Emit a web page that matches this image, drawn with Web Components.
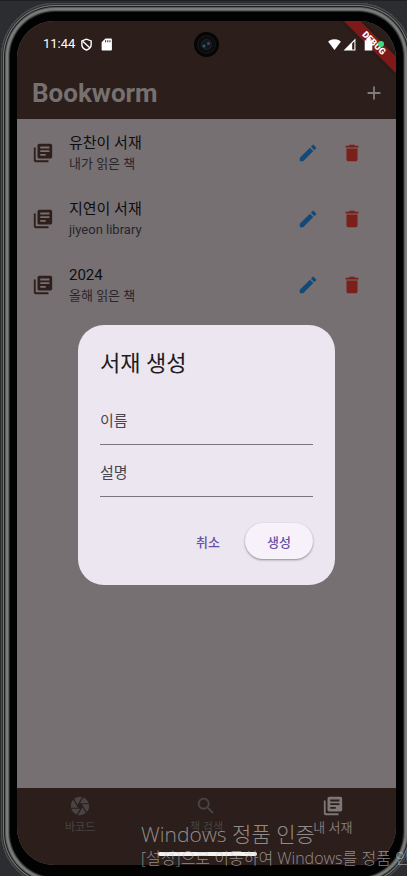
<!DOCTYPE html>
<html lang="ko">
<head>
<meta charset="utf-8">
<meta name="viewport" content="width=device-width, initial-scale=1">
<title>Bookworm</title>
<style>
  html, body { margin: 0; height: 100%; }
  body {
    overflow: hidden;
    background: #2b2d30;
    font-family: Roboto, "Noto Sans CJK KR", sans-serif;
    --bar: #2c1e1b;
    --page: #767073;
  }
</style>
</head>
<body>
<device-frame>
  <status-bar slot="status"></status-bar>
  <app-bar>Bookworm</app-bar>
  <shelf-list>
    <shelf-item><span slot="title">유찬이 서재</span><span slot="note">내가 읽은 책</span></shelf-item>
    <shelf-item><span slot="title">지연이 서재</span><span slot="note">jiyeon library</span></shelf-item>
    <shelf-item><span slot="title">2024</span><span slot="note">올해 읽은 책</span></shelf-item>
  </shelf-list>
  <bottom-nav>
    <nav-item icon="camera">바코드</nav-item>
    <nav-item icon="search">책 검색</nav-item>
    <nav-item icon="books" selected>내 서재</nav-item>
  </bottom-nav>
  <shelf-dialog slot="overlay"></shelf-dialog>
  <debug-banner slot="overlay">DEBUG</debug-banner>
</device-frame>
<activation-mark>
  <span slot="head">Windows 정품 인증</span>
  <span slot="text">[설정]으로 이동하여 Windows를 정품 인증합니다.</span>
</activation-mark>

<script>
const ICONS = {
  books: '<path d="M4 6H2v14c0 1.1.9 2 2 2h14v-2H4V6zm16-4H8c-1.1 0-2 .9-2 2v12c0 1.1.9 2 2 2h12c1.1 0 2-.9 2-2V4c0-1.1-.9-2-2-2zm-1 9H9V9h10v2zm-4 4H9v-2h6v2zm4-8H9V5h10v2z"/>',
  edit: '<path d="M3 17.25V21h3.75L17.81 9.94l-3.75-3.75L3 17.25zM20.71 7.04c.39-.39.39-1.02 0-1.41l-2.34-2.34c-.39-.39-1.02-.39-1.41 0l-1.83 1.83 3.75 3.75 1.83-1.83z"/>',
  trash: '<path d="M6 19c0 1.1.9 2 2 2h8c1.1 0 2-.9 2-2V7H6v12zM19 4h-3.5l-1-1h-5l-1 1H5v2h14V4z"/>',
  add: '<path d="M19 13h-6v6h-2v-6H5v-2h6V5h2v6h6v2z"/>',
  search: '<path d="M15.5 14h-.79l-.28-.27C15.41 12.59 16 11.11 16 9.5 16 5.91 13.09 3 9.5 3S3 5.91 3 9.5 5.91 16 9.5 16c1.61 0 3.09-.59 4.23-1.57l.27.28v.79l5 4.99L20.49 19l-4.99-5zm-6 0C7.01 14 5 11.99 5 9.5S7.01 5 9.5 5 14 7.01 14 9.5 11.99 14 9.5 14z"/>',
  camera: '<path d="M9.4 10.5l4.77-8.26C13.47 2.09 12.75 2 12 2c-2.4 0-4.6.85-6.32 2.25l3.66 6.35.06-.1zM21.54 9c-.92-2.92-3.15-5.26-6-6.34L11.88 9h9.66zm.26 1h-7.49l.29.5 4.76 8.25C21 16.97 22 14.61 22 12c0-.69-.07-1.35-.2-2zM8.54 12l-3.9-6.75C3.01 7.03 2 9.39 2 12c0 .69.07 1.35.2 2h7.49l-1.15-2zm-6.08 3c.92 2.92 3.15 5.26 6 6.34L12.12 15H2.46zm11.27 0l-3.9 6.76c.7.15 1.42.24 2.17.24 2.4 0 4.6-.85 6.32-2.25l-3.66-6.35-.93 1.6z"/>',
  shield: '<path d="M12 2.2L3.4 5.4v6c0 5.2 3.6 9.2 8.6 10.7 5-1.5 8.6-5.5 8.6-10.7v-6z" fill="none" stroke="currentColor" stroke-width="2.6"/><path d="M5 6l13 12" stroke="currentColor" stroke-width="2.6"/>',
  sd: '<path fill-rule="evenodd" d="M20 1H10L3 8v13c0 1.1.9 2 2 2h15c1.1 0 2-.9 2-2V3c0-1.1-.9-2-2-2zM9.500 8V4h1.800v4zm4 0V4h1.800v4zm4 0V4h1.800v4z"/>',
  wifi: '<path d="M12 22L.4 6.8C1 6.3 5 2.5 12 2.500s11 3.800 11.600 4.300z"/>',
  signal: '<path fill-rule="evenodd" d="M1 23L23 1v22zM17 21h4V6l-4 4z"/>',
  battery: '<path d="M5 4h4V1h6v3h4v19H5z"/>'
};

const define = (tag, html, setup) => customElements.define(tag, class extends HTMLElement {
  constructor() {
    super();
    const t = document.createElement('template');
    t.innerHTML = html;
    this.attachShadow({ mode: 'open' }).append(t.content.cloneNode(true));
  }
  connectedCallback() { if (setup) setup(this, this.shadowRoot); }
});

define('ui-icon', `
  <style>
    :host { display: block; flex: none; width: 22px; height: 22px; }
    svg { display: block; width: 100%; height: 100%; fill: currentColor; }
  </style>
  <svg viewBox="0 0 24 24" aria-hidden="true"></svg>`,
  (el, root) => { root.querySelector('svg').innerHTML = ICONS[el.getAttribute('name')]; });

define('device-frame', `
  <style>
    :host { display: block; box-sizing: border-box; height: 100%; padding: 2px 0 0 1px; border-top: 1px solid #1e1f22; }
    .case {
      box-sizing: border-box; height: calc(100% + 10px); margin: 0 -5px 0 0;
      padding: 18px 16px 21px 16px; border-radius: 54px; background: #020202;
      box-shadow: inset 0 0 0 1px #4b4d4d, inset 0 0 0 2px #2e2f2f, inset 0 0 0 3px #767878,
        inset 0 0 0 4px #1c1d1d, inset 0 0 0 5px #5a5c5c, inset 0 0 0 7px #7b7d7d,
        inset 0 0 0 8px #5d5f5f, inset 0 0 0 9px #242525;
    }
    .screen {
      position: relative; display: flex; flex-direction: column; height: 100%;
      overflow: hidden; border-radius: 37px; background: var(--page);
    }
  </style>
  <div class="case"><div class="screen">
    <slot name="status"></slot>
    <slot></slot>
    <slot name="overlay"></slot>
  </div></div>`);

define('status-bar', `
  <style>
    :host {
      display: grid; grid-template-columns: 1fr 26px 1fr; align-items: center; flex: none;
      height: 46px; padding: 0 12px 0 26px; background: var(--bar); color: #fff;
      font-size: 13px; line-height: 16px;
    }
    .side { display: flex; align-items: center; }
    .left { gap: 5px; }
    .right { justify-content: flex-end; gap: 2px; position: relative; z-index: 4; }
    ui-icon { width: 13px; height: 13px; }
    .sd { margin-left: 2px; }
    .bat { margin-left: 4px; }
    .dot { width: 6px; height: 6px; margin-left: 1px; border-radius: 50%; background: #3ddc84; }
    .lens { width: 25px; height: 25px; margin-left: -7px; }
  </style>
  <div class="side left"><span>11:44</span><ui-icon name="shield"></ui-icon><ui-icon class="sd" name="sd"></ui-icon></div>
  <svg class="lens" viewBox="0 0 25 25" aria-hidden="true">
    <circle cx="12.5" cy="12.5" r="12.5" fill="#050505"/>
    <circle cx="12.5" cy="12.5" r="9" fill="#0b0c0e" stroke="#17191b"/>
    <circle cx="12.5" cy="12.5" r="5" fill="#11171d" stroke="#202429"/>
    <circle cx="10" cy="14" r="1.5" fill="#315b63"/>
    <circle cx="14.5" cy="11.5" r="1.5" fill="#51405f"/>
  </svg>
  <div class="side right">
    <ui-icon name="wifi"></ui-icon><ui-icon name="signal"></ui-icon><ui-icon class="bat" name="battery"></ui-icon><span class="dot"></span>
  </div>`);

define('app-bar', `
  <style>
    :host {
      display: flex; align-items: center; justify-content: space-between; flex: none;
      height: 52px; padding: 0 11px 0 15px; background: var(--bar); color: #757171;
    }
    h1 { margin: 0; font-size: 26px; line-height: 32px; font-weight: 700; }
    button { padding: 0; border: 0; background: none; color: #817b7a; }
  </style>
  <h1><slot></slot></h1>
  <button aria-label="추가"><ui-icon name="add"></ui-icon></button>`);

define('shelf-list', `
  <style>:host { display: flex; flex-direction: column; flex: 1; min-height: 0; padding-top: 1px; }</style>
  <slot></slot>`);

define('shelf-item', `
  <style>
    :host { display: flex; align-items: center; height: 66px; padding: 0 22px 0 15px; }
    .lead { color: #2e1f1b; margin-right: 15px; }
    .text { flex: 1; min-width: 0; }
    .title { font-size: 15px; line-height: 22px; color: #0e0d0f; }
    .note { font-size: 13px; line-height: 20px; color: #28252a; }
    button { display: grid; place-items: center; width: 44px; height: 44px; padding: 0; border: 0; background: none; }
    .edit { color: #114a78; }
    .del { color: #7a1f19; }
  </style>
  <ui-icon class="lead" name="books"></ui-icon>
  <div class="text">
    <div class="title"><slot name="title"></slot></div>
    <div class="note"><slot name="note"></slot></div>
  </div>
  <button class="edit" aria-label="수정"><ui-icon name="edit"></ui-icon></button>
  <button class="del" aria-label="삭제"><ui-icon name="trash"></ui-icon></button>`);

define('bottom-nav', `
  <style>
    :host { display: block; flex: none; position: relative; background: var(--bar); }
    nav { display: flex; height: 77px; }
    .home { position: absolute; left: 50%; bottom: 9px; width: 99px; height: 4px; margin-left: -49px; border-radius: 2px; background: #f4f2f2; }
  </style>
  <nav><slot></slot></nav>
  <div class="home"></div>`);

define('nav-item', `
  <style>
    :host { display: block; flex: 1; color: #484443; font-size: 11px; }
    :host([selected]) { color: #7d7776; font-size: 13px; }
    button {
      display: flex; flex-direction: column; align-items: center; gap: 1px; width: 100%; padding: 7px 0 0;
      border: 0; background: none; color: inherit; font: inherit; line-height: 20px;
    }
  </style>
  <button><ui-icon></ui-icon><slot></slot></button>`,
  (el, root) => {
    const old = root.querySelector('ui-icon');
    const icon = document.createElement('ui-icon');
    icon.setAttribute('name', el.getAttribute('icon'));
    old.replaceWith(icon);
  });

define('shelf-dialog', `
  <style>
    :host { position: absolute; inset: 0; display: flex; align-items: center; padding: 46px 61px 22px 61px; }
    dialog {
      position: static; box-sizing: border-box; width: 100%; max-width: 560px; margin: 0 auto;
      padding: 23px 22px 26px; border: 0; border-radius: 26px; background: #ece6f0; color: #1d1b20;
    }
    h2 { margin: 0 0 13px; font-size: 22px; line-height: 32px; font-weight: 400; }
    input {
      display: block; box-sizing: border-box; width: 100%; height: 52px; padding: 4px 0 0; margin: 0;
      border: 0; border-bottom: 1px solid #79747e; border-radius: 0; background: none;
      font: inherit; font-size: 15px; outline: 0;
    }
    input::placeholder { color: #49454f; opacity: 1; }
    .actions { display: flex; justify-content: flex-end; gap: 8px; margin-top: 26px; }
    button {
      min-width: 58px; height: 36px; padding: 0 12px; border: 0; border-radius: 18px; background: none;
      color: #6750a4; font: inherit; font-size: 13px; font-weight: 500;
    }
    .ok { min-width: 68px; background: #f7f2fa; box-shadow: 0 1px 2px rgba(0,0,0,.3), 0 1px 3px rgba(0,0,0,.12); }
  </style>
  <dialog open aria-labelledby="t">
    <h2 id="t">서재 생성</h2>
    <input type="text" placeholder="이름" aria-label="이름">
    <input type="text" placeholder="설명" aria-label="설명">
    <div class="actions"><button>취소</button><button class="ok">생성</button></div>
  </dialog>`);

define('debug-banner', `
  <style>
    :host {
      position: absolute; top: 16px; right: -28px; width: 100px; height: 12px; transform: rotate(45deg);
      background: #7f1818; color: #fff; box-shadow: 0 0 4px rgba(0,0,0,.4);
      font-size: 9px; line-height: 12px; font-weight: 900; text-align: center;
    }
  </style>
  <slot></slot>`);

define('activation-mark', `
  <style>
    :host {
      position: absolute; left: 141px; right: 0; bottom: 7px; overflow: hidden; white-space: nowrap;
      color: rgba(205,203,203,.65); pointer-events: none; font-family: "Open Sans", "Noto Sans CJK KR", sans-serif;
      font-weight: 300;
    }
    .head { font-size: 21px; line-height: 26px; }
    .text { font-size: 16px; line-height: 22px; }
  </style>
  <div class="head"><slot name="head"></slot></div>
  <div class="text"><slot name="text"></slot></div>`);
</script>
</body>
</html>
